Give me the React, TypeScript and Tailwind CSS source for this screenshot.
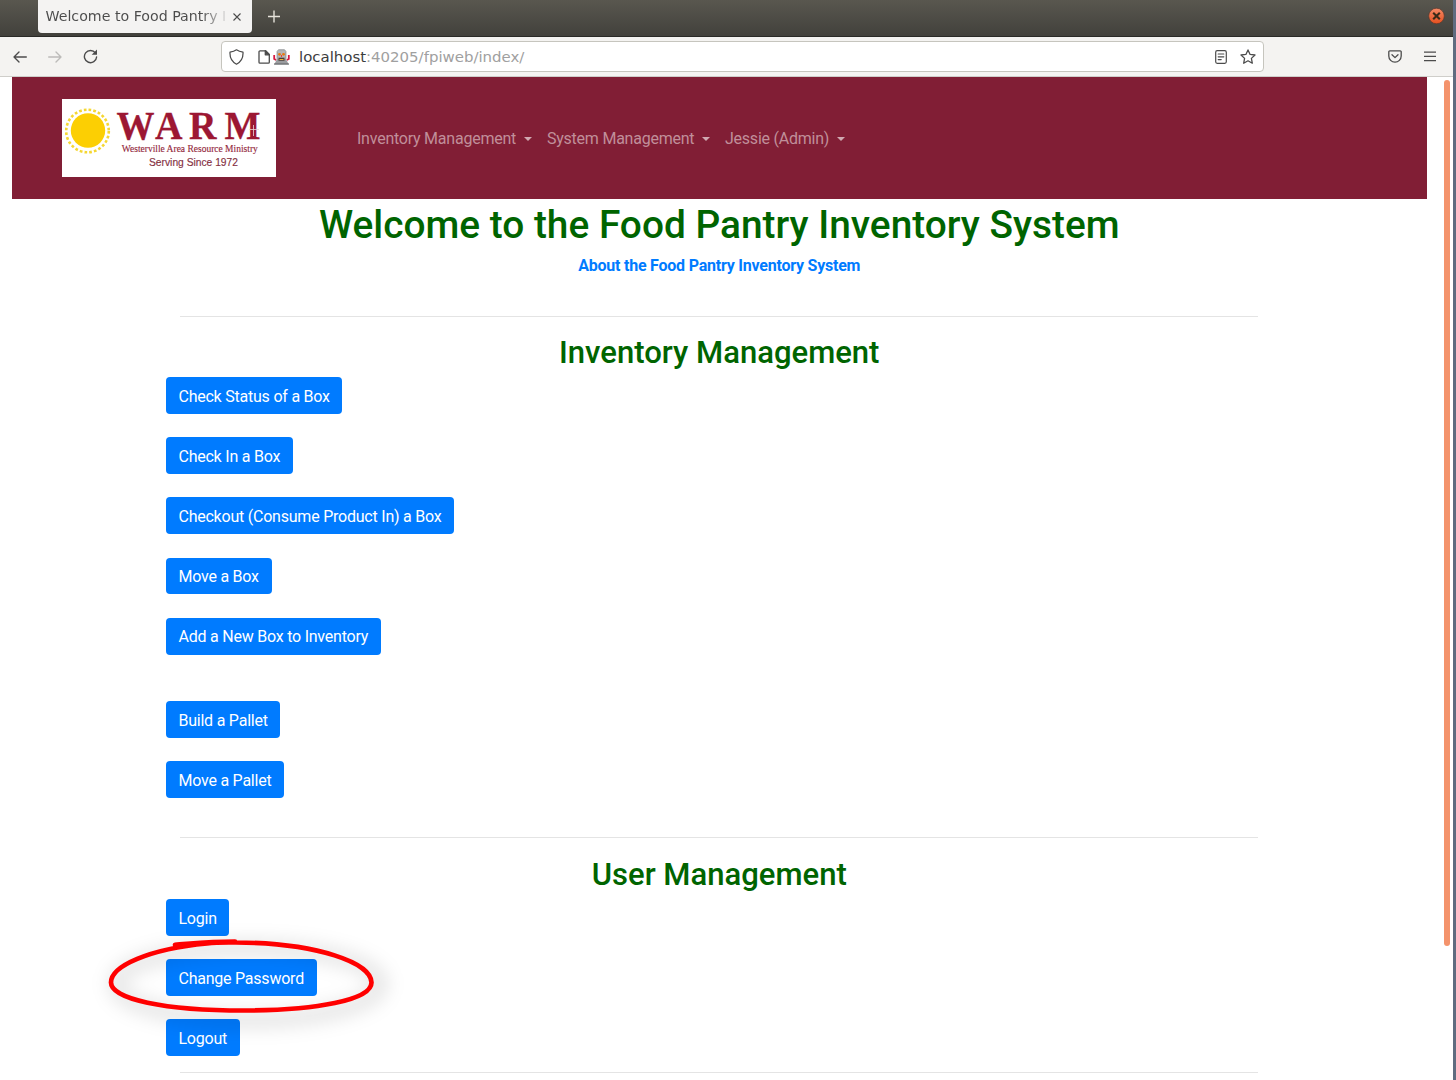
import React from "react";

const navItems = [
  { label: "Inventory Management", width: "w-[190px]" },
  { label: "System Management", width: "w-[178px]" },
  { label: "Jessie (Admin)", width: "w-[120px]" },
];

function ActionButton({ children }: { children: React.ReactNode }) {
  return (
    <button className="h-[36.8px] shrink-0 rounded-[4px] bg-[#007bff] px-[12.7px] pt-[1.4px] text-[16px] leading-[23.3px] tracking-[-0.225px] whitespace-nowrap text-white">
      {children}
    </button>
  );
}

function ButtonColumn({ labels }: { labels: string[] }) {
  return (
    <div className="flex flex-col items-start gap-[23.4px]">
      {labels.map((label) => (
        <ActionButton key={label}>{label}</ActionButton>
      ))}
    </div>
  );
}

function Rule() {
  return <div className="mx-[14.5px] h-px shrink-0 bg-[#e4e4e4]" />;
}

function SectionTitle({ children }: { children: React.ReactNode }) {
  return (
    <h2 className="text-center text-[31.06px] leading-[37.3px] font-medium text-[#006400]">{children}</h2>
  );
}

function TitleBar() {
  return (
    <div className="flex h-[37px] shrink-0 items-start border-b border-[#2a2a27] bg-linear-to-b from-[#59574f] to-[#42413c]">
      <div className="ml-[38px] flex h-[33px] w-[214px] items-center rounded-b-[4px] bg-[#f4f3f2] pl-[7.5px] font-['DejaVu_Sans',sans-serif] text-[14.2px] text-[#4b4b4b]">
        <span className="w-[184px] overflow-hidden bg-linear-to-r from-[#4b4b4b] from-84% to-transparent bg-clip-text whitespace-nowrap text-transparent">
          Welcome to Food Pantry I
        </span>
        <svg className="ml-[3px]" width="8" height="8" viewBox="0 0 8 8" stroke="#4b4b4b" strokeWidth="1.1">
          <path d="M0.5 0.5l7 7M7.5 0.5l-7 7" />
        </svg>
      </div>
      <svg className="mt-[10px] ml-[16px]" width="12" height="13" viewBox="0 0 12 13" stroke="#e6e3da" strokeWidth="1.4">
        <path d="M0 6.5h12M6 0.5v12" />
      </svg>
      <svg className="mt-[7px] mr-[8px] ml-auto" width="17" height="18" viewBox="0 0 17 18">
        <defs>
          <linearGradient id="close" x1="0" y1="0" x2="0" y2="1">
            <stop offset="0" stopColor="#f58a66" />
            <stop offset="1" stopColor="#e5501f" />
          </linearGradient>
        </defs>
        <circle cx="8.5" cy="9" r="7.8" fill="url(#close)" stroke="#5a382c" strokeWidth="0.7" />
        <path d="M5.2 5.7l6.6 6.6M11.8 5.7l-6.6 6.6" stroke="#3a2a17" strokeWidth="2.1" />
      </svg>
    </div>
  );
}

function RobotIcon() {
  return (
    <svg width="17" height="16" viewBox="0 0 17 16">
      <path d="M1.2 6v4l2 1M15.8 6v4l-2 1" fill="none" stroke="#d7193f" strokeWidth="1.8" />
      <path d="M5.5 .7h6L13 2.5V10.5H4V2.5z" fill="#b4b5b7" stroke="#76787b" strokeWidth="0.6" />
      <path d="M3.5 11h10l2.3 4.5H1.2z" fill="#9a9c9f" />
      <path d="M1 14.5h15v1H1z" fill="#606265" />
      <circle cx="6.5" cy="5.3" r="1.4" fill="#e9790f" />
      <circle cx="10.5" cy="5.3" r="1.4" fill="#e9790f" />
      <path d="M5.5 8.700h6v3h-6z" fill="#493b33" />
      <path d="M6.500 10h4v1h-4z" fill="#efb23c" />
      <path d="M8 6h1v2H8z" fill="#e5443a" />
    </svg>
  );
}

function Toolbar() {
  return (
    <div className="flex h-[40px] shrink-0 items-center border-b border-[#cfceca] bg-[#f4f3f1]">
      <div className="flex w-[221px] items-center pl-[13px]">
        <svg width="14" height="12" viewBox="0 0 14 12" fill="none" stroke="#4c4c4c" strokeWidth="1.35" strokeLinecap="round" strokeLinejoin="round">
          <path d="M13.3 6H1M6 1L1 6l5 5" />
        </svg>
        <svg className="ml-[21px]" width="14" height="12" viewBox="0 0 14 12" fill="none" stroke="#bcbbb9" strokeWidth="1.35" strokeLinecap="round" strokeLinejoin="round">
          <path d="M0.7 6H13M8 1l5 5-5 5" />
        </svg>
        <svg className="ml-[21px]" width="15" height="15" viewBox="0 0 15 15" fill="none">
          <path d="M12.4 3.9A6.1 6.1 0 1 0 13.6 8" stroke="#4c4c4c" strokeWidth="1.4" strokeLinecap="round" />
          <path d="M14 0.5v5.3H8.7z" fill="#4c4c4c" />
        </svg>
      </div>
      <div className="flex h-[31px] w-[1043px] items-center rounded-[4px] border border-[#c6c5be] bg-white">
        <svg className="ml-[7px]" width="15" height="16" viewBox="0 0 15 16" fill="none" stroke="#4c4c4c" strokeWidth="1.25" strokeLinejoin="round">
          <path d="M7.5 0.8C5.7 2 3.3 2.8 1 3.2c-.3 5 1.7 9.6 6.5 12 4.8-2.4 6.8-7 6.5-12C11.7 2.8 9.3 2 7.5 .8z" />
        </svg>
        <svg className="ml-[14px]" width="12" height="14" viewBox="0 0 12 14" fill="none" stroke="#4c4c4c" strokeWidth="1.3" strokeLinejoin="round">
          <path d="M2 .8h5.6l3.7 3.7v7.7a1 1 0 0 1-1 1H2a1 1 0 0 1-1-1V1.8a1 1 0 0 1 1-1z" />
          <path d="M7.3 .8v4h4z" fill="#4c4c4c" />
        </svg>
        <span className="ml-[3px]">
          <RobotIcon />
        </span>
        <span className="ml-[9px] pt-[2px] font-['DejaVu_Sans',sans-serif] text-[14.95px] text-[#a0a0a0]">
          <span className="text-[#3d3d3d]">localhost</span>:40205/fpiweb/index/
        </span>
        <svg className="mr-[13px] ml-auto" width="12" height="14" viewBox="0 0 12 14" fill="none" stroke="#4c4c4c" strokeWidth="1.2" strokeLinecap="round">
          <rect x="0.7" y="0.7" width="10.6" height="12.6" rx="1.5" />
          <path d="M3.2 4h5.6M3.2 6.8h5.6M3.2 9.6h3" />
        </svg>
        <svg className="mr-[7px]" width="16" height="15" viewBox="0 0 16 15" fill="none" stroke="#4c4c4c" strokeWidth="1.3" strokeLinejoin="round">
          <path d="M8 .9l2.1 4.5 4.9.6-3.6 3.4.9 4.8L8 11.8l-4.3 2.4.9-4.8L1 6l4.9-.6z" />
        </svg>
      </div>
      <svg className="ml-[124px]" width="14" height="13" viewBox="0 0 14 13" fill="none" stroke="#4c4c4c" strokeWidth="1.3" strokeLinecap="round" strokeLinejoin="round">
        <path d="M1.8 .8h10.4a1 1 0 0 1 1 1v4.2a6.2 6.2 0 0 1-12.4 0V1.8a1 1 0 0 1 1-1z" />
        <path d="M4 4.7l3 2.9 3-2.9" />
      </svg>
      <svg className="ml-[22px]" width="12" height="11" viewBox="0 0 12 11" stroke="#4c4c4c" strokeWidth="1.3">
        <path d="M0 1.2h12M0 5.4h12M0 9.6h12" />
      </svg>
    </div>
  );
}

function Logo() {
  return (
    <svg width="214" height="78" viewBox="0 0 214 78" className="ml-[50.5px] bg-white">
      <circle cx="25.5" cy="32" r="21.3" fill="none" stroke="#f5d732" strokeWidth="2.6" strokeDasharray="2.7 2.1" />
      <circle cx="26" cy="31.5" r="17.2" fill="#fccf03" />
      <g fill="#9c1733" stroke="#9c1733" strokeWidth="0.3" fontFamily="Liberation Serif, serif" fontWeight="700" fontSize="41">
        <text x="54.5" y="40" textLength="38" lengthAdjust="spacingAndGlyphs">W</text>
        <text x="93" y="40" textLength="27.5" lengthAdjust="spacingAndGlyphs">A</text>
        <text x="127" y="40" textLength="27.5" lengthAdjust="spacingAndGlyphs">R</text>
        <text x="162.5" y="40" textLength="36" lengthAdjust="spacingAndGlyphs">M</text>
      </g>
      <path d="M191.5 26v11M187 30.5h10" stroke="#ead3d8" strokeWidth="0.8" />
      <text x="59.8" y="53.3" fill="#93283c" stroke="#93283c" strokeWidth="0.15" fontFamily="Liberation Serif, serif" fontSize="11.3" textLength="136" lengthAdjust="spacingAndGlyphs">Westerville Area Resource Ministry</text>
      <text x="87" y="66.8" fill="#84303f" stroke="#84303f" strokeWidth="0.15" fontFamily="Liberation Sans, sans-serif" fontSize="11" textLength="89" lengthAdjust="spacingAndGlyphs">Serving Since 1972</text>
    </svg>
  );
}

function Navbar() {
  return (
    <nav className="flex h-[122px] shrink-0 items-center bg-[#811e35]">
      <Logo />
      <div className="mt-[2px] ml-[81px] flex text-[16px] leading-[23.3px] tracking-[-0.235px] text-[#c08f9a]">
        {navItems.map((item) => (
          <div key={item.label} className={"flex items-center gap-[7.5px] " + item.width}>
            <span className="whitespace-nowrap">{item.label}</span>
            <span className="border-x-[4px] border-t-[4px] border-x-transparent border-t-[#d0a9b1]" />
          </div>
        ))}
      </div>
    </nav>
  );
}

function Annotation() {
  return (
    <svg className="pointer-events-none absolute -top-[31.5px] -left-[76px] overflow-visible" width="310" height="110" viewBox="90 927 310 110" fill="none">
      <defs>
        <filter id="soft" x="-20%" y="-60%" width="140%" height="220%">
          <feGaussianBlur stdDeviation="9" />
        </filter>
      </defs>
      <ellipse cx="248" cy="983" rx="132" ry="36" stroke="#000" strokeOpacity="0.1" strokeWidth="16" filter="url(#soft)" />
      <path
        d="M175 943.8C188 943 208 940.5 235 940.5M207 942.5C215 941.5 225 941.3 236 941.5C318 942 371.5 962 371.5 981.5C371.5 999 316 1009.5 244 1009.5C164 1009.5 111 998 111 981.5C111 965 149 948 207 942.5"
        stroke="#f00"
        strokeWidth="4.7"
        strokeLinecap="round"
        strokeLinejoin="round"
      />
    </svg>
  );
}

export default function App() {
  return (
    <div className="flex h-[1080px] w-[1456px] overflow-hidden bg-white font-[Roboto,sans-serif]">
      <div className="flex w-[1453px] shrink-0 flex-col">
        <TitleBar />
        <Toolbar />
        <div className="flex min-h-0 flex-1">
          <div className="ml-[11.5px] flex w-[1415.5px] shrink-0 flex-col">
            <Navbar />
            <main className="mx-auto flex w-[1107px] flex-col">
              <h1 className="mt-[3px] text-center text-[38.83px] leading-[46.6px] font-medium text-[#006400]">
                Welcome to the Food Pantry Inventory System
              </h1>
              <a className="mt-[5.4px] mb-[39px] text-center text-[16px] leading-[23.3px] font-bold tracking-[-0.225px] text-[#007bff]">
                About the Food Pantry Inventory System
              </a>
              <Rule />
              <div className="mt-[17px] mb-[5.5px]">
                <SectionTitle>Inventory Management</SectionTitle>
              </div>
              <ButtonColumn
                labels={[
                  "Check Status of a Box",
                  "Check In a Box",
                  "Checkout (Consume Product In) a Box",
                  "Move a Box",
                  "Add a New Box to Inventory",
                ]}
              />
              <div className="mt-[46.5px] mb-[38.8px]">
                <ButtonColumn labels={["Build a Pallet", "Move a Pallet"]} />
              </div>
              <Rule />
              <div className="mt-[17.6px] mb-[6.3px]">
                <SectionTitle>User Management</SectionTitle>
              </div>
              <div className="flex flex-col items-start gap-[23.4px]">
                <ActionButton>Login</ActionButton>
                <div className="relative">
                  <ActionButton>Change Password</ActionButton>
                  <Annotation />
                </div>
                <ActionButton>Logout</ActionButton>
              </div>
              <div className="mt-[15.7px]">
                <Rule />
              </div>
            </main>
          </div>
          <div className="mt-[3px] ml-[17px] h-[866px] w-[6px] rounded-full bg-[#f4936c]" />
        </div>
      </div>
      <div className="flex-1 bg-[#5f6c80]" />
    </div>
  );
}
